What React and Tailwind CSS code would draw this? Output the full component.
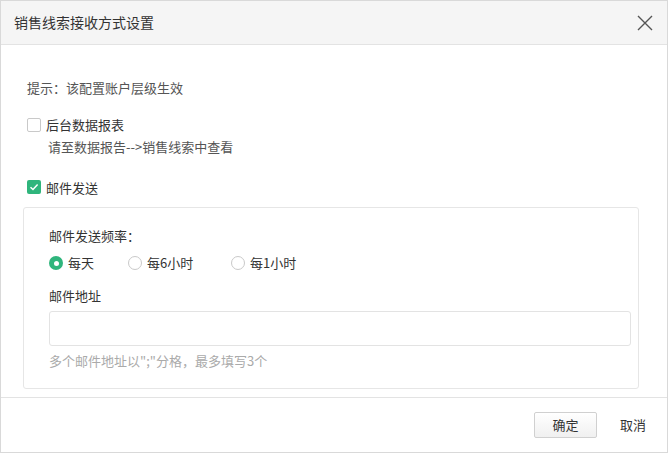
import React, { useState } from 'react';

const FONT = { fontFamily: '"Noto Sans CJK SC", "Liberation Sans", sans-serif' };

const Checkbox = ({ checked, onChange, label }) => (
  <label className="flex items-center gap-[5px] cursor-pointer select-none" onClick={onChange}>
    {checked ? (
      <span className="w-[14px] h-[14px] rounded-[2px] bg-[#2fb57c] flex items-center justify-center">
        <svg width="10" height="10" viewBox="0 0 10 10">
          <path d="M1.5 5.2 L4 7.5 L8.6 2.6" fill="none" stroke="#fff" strokeWidth="1.5" />
        </svg>
      </span>
    ) : (
      <span className="w-[14px] h-[14px] rounded-[2px] border border-[#c9c9c9] bg-white" />
    )}
    <span className="text-[13px] text-[#333]">{label}</span>
  </label>
);

const Radio = ({ checked, onClick, label }) => (
  <label className="flex items-center gap-[5px] cursor-pointer select-none" onClick={onClick}>
    {checked ? (
      <span className="w-[14px] h-[14px] rounded-full bg-[#2fb57c] flex items-center justify-center">
        <span className="w-[5px] h-[5px] rounded-full bg-white" />
      </span>
    ) : (
      <span className="w-[14px] h-[14px] rounded-full border border-[#c9c9c9] bg-white" />
    )}
    <span className="text-[13px] text-[#333]">{label}</span>
  </label>
);

export default function App() {
  const [report, setReport] = useState(false);
  const [mail, setMail] = useState(true);
  const [freq, setFreq] = useState('day');

  return (
    <div className="w-[668px] h-[453px] bg-white border border-[#d9d9d9] flex flex-col" style={FONT}>
      {/* Header */}
      <div className="h-[44px] shrink-0 bg-[#f5f5f5] border-b border-[#e3e3e3] flex items-center justify-between pl-[13px] pr-[10px]">
        <span className="text-[14px] text-[#333]">销售线索接收方式设置</span>
        <button className="w-[24px] h-[24px] flex items-center justify-center">
          <svg width="16" height="16" viewBox="0 0 16 16">
            <path d="M1 1 L15 15 M15 1 L1 15" stroke="#555" strokeWidth="1.4" fill="none" />
          </svg>
        </button>
      </div>

      {/* Body */}
      <div className="flex-1 pl-[26px] pr-[28px] pt-[33px]">
        <div className="text-[13px] text-[#555] leading-[20px]">提示：该配置账户层级生效</div>

        <div className="mt-[17px]">
          <Checkbox checked={report} onChange={() => setReport(!report)} label="后台数据报表" />
          <div className="pl-[21px] mt-[2px] text-[13px] text-[#555] leading-[20px]">请至数据报告--&gt;销售线索中查看</div>
        </div>

        <div className="mt-[21px]">
          <Checkbox checked={mail} onChange={() => setMail(!mail)} label="邮件发送" />
        </div>

        <div className="mt-[10px] -ml-[4px] border border-[#e6e6e6] rounded-[3px] pl-[25px] pr-[7px] pt-[18px] pb-[17px]">
          <div className="text-[13px] text-[#333] leading-[20px]">邮件发送频率：</div>
          <div className="flex items-center mt-[7px] h-[20px]">
            <div className="w-[79px]">
              <Radio checked={freq === 'day'} onClick={() => setFreq('day')} label="每天" />
            </div>
            <div className="w-[103px]">
              <Radio checked={freq === '6h'} onClick={() => setFreq('6h')} label="每6小时" />
            </div>
            <Radio checked={freq === '1h'} onClick={() => setFreq('1h')} label="每1小时" />
          </div>
          <div className="text-[13px] text-[#333] leading-[20px] mt-[13px]">邮件地址</div>
          <input
            type="text"
            className="mt-[5px] w-full h-[35px] border border-[#e3e3e3] rounded-[3px] px-[8px] text-[13px] outline-none"
          />
          <div className="mt-[5px] text-[13px] text-[#aaa] leading-[20px]">多个邮件地址以";"分格，最多填写3个</div>
        </div>
      </div>

      {/* Footer */}
      <div className="h-[55px] shrink-0 border-t border-[#e3e3e3] flex items-center justify-end pr-[21px] gap-[23px]">
        <button className="w-[63px] h-[26px] border border-[#d0d0d0] rounded-[2px] bg-gradient-to-b from-white to-[#f0f0f0] text-[13px] text-[#333]">
          确定
        </button>
        <button className="text-[13px] text-[#333]">取消</button>
      </div>
    </div>
  );
}
